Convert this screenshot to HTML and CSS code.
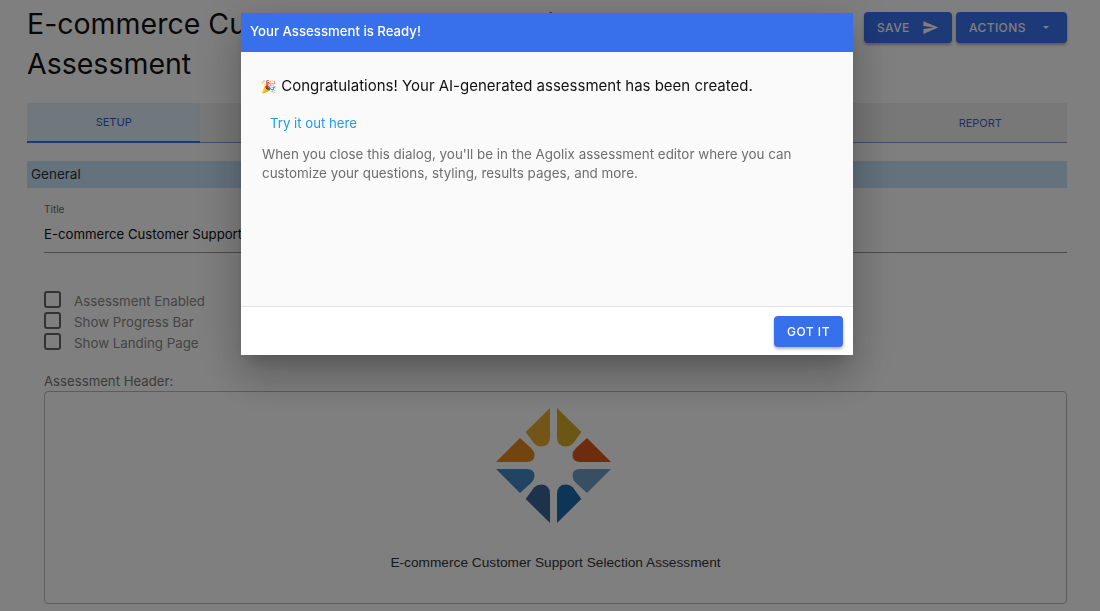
FILE: index.html
```html
<!DOCTYPE html>
<html>
  <head>
    <title>Assessment Editor</title>
    <link rel="stylesheet" href="styles.css">
  </head>
  <body>
    <div class="page">
      <div class="page-header">
        <h1 class="page-title">E-commerce Customer Support Selection Assessment</h1>
        <div class="header-buttons">
          <button type="button" class="primary-btn save-btn">
            Save
            <svg viewBox="0 0 24 24" width="17" height="17"><path d="M2.01 21 23 12 2.01 3 2 10l15 2-15 2z" fill="currentColor"/></svg>
          </button>
          <button type="button" class="primary-btn actions-btn">
            Actions
            <span class="caret"></span>
          </button>
        </div>
      </div>

      <div class="tabs">
        <div class="tab active">Setup</div>
        <div class="tab"></div>
        <div class="tab"></div>
        <div class="tab"></div>
        <div class="tab"></div>
        <div class="tab">Report</div>
      </div>

      <div class="section-bar">General</div>

      <div class="form-area">
        <div class="title-field">
          <label class="title-label">Title</label>
          <div class="title-value">E-commerce Customer Support Selection Assessment</div>
        </div>

        <div class="checks">
          <div class="check-row"><span class="check-box"></span><span>Assessment Enabled</span></div>
          <div class="check-row"><span class="check-box"></span><span>Show Progress Bar</span></div>
          <div class="check-row"><span class="check-box"></span><span>Show Landing Page</span></div>
        </div>

        <div class="header-label">Assessment Header:</div>
        <div class="header-box">
          <svg class="logo" viewBox="0 0 115 115" width="115" height="115">
            <defs>
              <path id="petalUp" d="M54 0V29Q54 38.500 45 38.500Q41 38.500 38 35.500L29.700 24Z"/>
              <path id="petalSide" d="M0 54L24 30L35 40Q38.500 43.500 38.500 47Q38.500 54 31 54Z"/>
            </defs>
            <use href="#petalUp" fill="#e6ab35"/>
            <use href="#petalUp" fill="#d9ad2c" transform="translate(115 0) scale(-1 1)"/>
            <use href="#petalSide" fill="#e08a1f"/>
            <use href="#petalSide" fill="#d9591a" transform="translate(115 0) scale(-1 1)"/>
            <use href="#petalSide" fill="#4389c6" transform="translate(0 115) scale(1 -1)"/>
            <use href="#petalSide" fill="#6f9cc6" transform="translate(115 115) scale(-1 -1)"/>
            <use href="#petalUp" fill="#3f6496" transform="translate(0 115) scale(1 -1)"/>
            <use href="#petalUp" fill="#1c69ad" transform="translate(115 115) scale(-1 -1)"/>
          </svg>
          <div class="logo-caption">E-commerce Customer Support Selection Assessment</div>
        </div>
      </div>
    </div>

    <div class="backdrop"></div>

    <div class="dialog">
      <div class="dialog-title">Your Assessment is Ready!</div>
      <div class="dialog-body">
        <p class="congrats"><span class="party">🎉</span> Congratulations! Your AI-generated assessment has been created.</p>
        <a class="try-link" href="#">Try it out here</a>
        <p class="dialog-text">When you close this dialog, you'll be in the Agolix assessment editor where you can customize your questions, styling, results pages, and more.</p>
      </div>
      <div class="dialog-actions">
        <button type="button" class="got-btn">Got it</button>
      </div>
    </div>
  </body>
</html>
```

FILE: styles.css
```css
* {
  box-sizing: border-box;
}

html,
body {
  height: 100%;
}

body {
  margin: 0;
  background-color: #fff;
  font-family: "Inter", "Liberation Sans", sans-serif;
  overflow: hidden;
}

.page {
  padding: 4px 33px 0 27px;
}

.page-header {
  display: flex;
  justify-content: space-between;
  align-items: flex-start;
}

.page-title {
  width: 660px;
  margin: 0;
  font-size: 28.500px;
  font-weight: 400;
  line-height: 40px;
  color: #111;
}

.header-buttons {
  display: flex;
  gap: 4px;
  margin-top: 8px;
}

.primary-btn {
  display: flex;
  align-items: center;
  justify-content: space-between;
  height: 31px;
  padding: 0 13px;
  border: none;
  border-radius: 4px;
  background-color: #3a72f0;
  color: #fff;
  font-family: inherit;
  font-size: 12px;
  font-weight: 500;
  letter-spacing: 0.4px;
  text-transform: uppercase;
  box-shadow: 0 2px 3px rgba(0, 0, 0, 0.3);
}

.save-btn {
  width: 88px;
}

.actions-btn {
  width: 111px;
}

.caret {
  width: 0;
  height: 0;
  margin-right: 5px;
  border-left: 3.500px solid transparent;
  border-right: 3.500px solid transparent;
  border-top: 3.500px solid #fff;
}

.tabs {
  display: grid;
  grid-template-columns: repeat(6, 1fr);
  height: 40px;
  margin-top: 19px;
  background-color: #f0f0f0;
  border-bottom: 1px solid #7f9fe0;
}

.tab {
  display: flex;
  align-items: center;
  justify-content: center;
  font-size: 11px;
  color: #4a5fc8;
  text-transform: uppercase;
}

.tab.active {
  background-color: #e0f0fc;
  color: #3054d8;
  border-bottom: 2px solid #3a72f0;
  margin-bottom: -1px;
}

.section-bar {
  height: 27px;
  margin-top: 18px;
  padding: 0 4px;
  background-color: #c6e4fb;
  font-size: 13.500px;
  line-height: 26px;
  color: #333;
}

.form-area {
  padding-left: 17px;
}

.title-field {
  height: 65px;
  border-bottom: 1px solid #999;
  padding-top: 15px;
}

.title-label {
  display: block;
  font-size: 10px;
  line-height: 12px;
  color: #666;
}

.title-value {
  margin-top: 9px;
  font-size: 13.200px;
  line-height: 20px;
  color: #111;
}

.checks {
  margin-top: 37px;
}

.check-row {
  display: flex;
  align-items: center;
  height: 21.300px;
  font-size: 13.300px;
  color: #888;
}

.check-box {
  width: 17px;
  height: 17px;
  margin-right: 13px;
  margin-bottom: 3px;
  border: 2px solid #666;
  border-radius: 3px;
}

.header-label {
  margin-top: 18px;
  font-size: 13.200px;
  line-height: 18px;
  color: #777;
}

.header-box {
  display: flex;
  flex-direction: column;
  align-items: center;
  height: 213px;
  margin-top: 1px;
  padding-top: 16px;
  border: 1px solid #bbb;
  border-radius: 4px;
}

.logo {
  display: block;
  margin-right: 4px;
}

.logo-caption {
  margin-top: 31px;
  font-family: "Liberation Sans", Arial, sans-serif;
  font-size: 13.700px;
  line-height: 18px;
  color: #333;
}

.backdrop {
  position: fixed;
  top: 0;
  right: 0;
  bottom: 0;
  left: 0;
  background-color: rgba(0, 0, 0, 0.5);
}

.dialog {
  position: fixed;
  top: 13px;
  left: 241px;
  display: flex;
  flex-direction: column;
  width: 612px;
  height: 342px;
  background-color: #fafafa;
  box-shadow: 0 11px 15px -7px rgba(0, 0, 0, 0.2), 0 24px 38px 3px rgba(0, 0, 0, 0.14), 0 9px 46px 8px rgba(0, 0, 0, 0.12);
}

.dialog-title {
  height: 39px;
  padding: 0 9px;
  background-color: #3870eb;
  color: #fff;
  font-size: 13.200px;
  font-weight: 500;
  line-height: 37px;
}

.dialog-body {
  flex: 1;
  padding: 24px 21px 0 20px;
}

.congrats {
  margin: 0;
  font-size: 15px;
  line-height: 20px;
  color: #111;
}

.party {
  font-size: 12.500px;
}

.try-link {
  display: block;
  margin: 16px 0 0 9px;
  font-size: 13.200px;
  line-height: 20px;
  color: #1e9bec;
  text-decoration: none;
}

.dialog-text {
  margin: 12px 0 0 1px;
  font-size: 13.400px;
  line-height: 19px;
  color: #6e6e6e;
}

.dialog-actions {
  display: flex;
  justify-content: flex-end;
  height: 49px;
  padding: 9px 10px 0 0;
  border-top: 1px solid #e4e4e4;
  background-color: #fff;
}

.got-btn {
  width: 69px;
  height: 31px;
  border: none;
  border-radius: 4px;
  background-color: #3870eb;
  color: #fff;
  font-family: inherit;
  font-size: 12px;
  font-weight: 500;
  letter-spacing: 0.5px;
  text-transform: uppercase;
  box-shadow: 0 2px 3px rgba(0, 0, 0, 0.3);
}
```
